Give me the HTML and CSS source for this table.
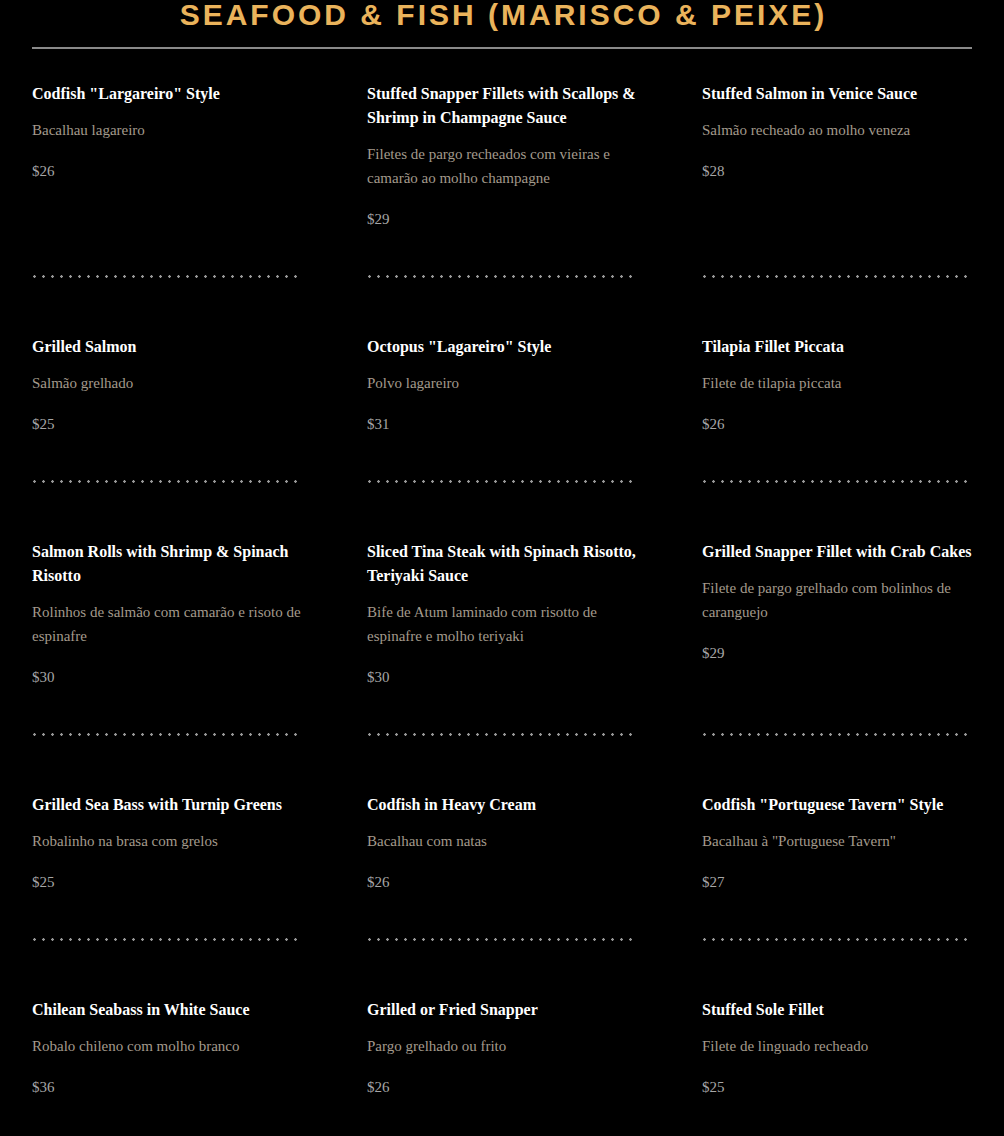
FILE: index.html
```html
<!DOCTYPE html>
<html lang="en">
<head>
    <meta charset="UTF-8">
    <meta name="viewport" content="width=device-width, initial-scale=1.0">
    <title>Seafood &amp; Fish</title>
    <link rel="stylesheet" href="styles.css">
</head>
<body>
    <h1 class="section-title">Seafood &amp; Fish (Marisco &amp; Peixe)</h1>

    <div class="menu">
        <div class="item">
            <div class="item-body">
                <h3>Codfish "Largareiro" Style</h3>
                <p class="desc">Bacalhau lagareiro</p>
                <p class="price">$26</p>
            </div>
            <div class="dots"></div>
        </div>
        <div class="item">
            <div class="item-body">
                <h3>Stuffed Snapper Fillets with Scallops &amp; Shrimp in Champagne Sauce</h3>
                <p class="desc">Filetes de pargo recheados com vieiras e camarão ao molho champagne</p>
                <p class="price">$29</p>
            </div>
            <div class="dots"></div>
        </div>
        <div class="item">
            <div class="item-body">
                <h3>Stuffed Salmon in Venice Sauce</h3>
                <p class="desc">Salmão recheado ao molho veneza</p>
                <p class="price">$28</p>
            </div>
            <div class="dots"></div>
        </div>

        <div class="item">
            <div class="item-body">
                <h3>Grilled Salmon</h3>
                <p class="desc">Salmão grelhado</p>
                <p class="price">$25</p>
            </div>
            <div class="dots"></div>
        </div>
        <div class="item">
            <div class="item-body">
                <h3>Octopus "Lagareiro" Style</h3>
                <p class="desc">Polvo lagareiro</p>
                <p class="price">$31</p>
            </div>
            <div class="dots"></div>
        </div>
        <div class="item">
            <div class="item-body">
                <h3>Tilapia Fillet Piccata</h3>
                <p class="desc">Filete de tilapia piccata</p>
                <p class="price">$26</p>
            </div>
            <div class="dots"></div>
        </div>

        <div class="item">
            <div class="item-body">
                <h3>Salmon Rolls with Shrimp &amp; Spinach Risotto</h3>
                <p class="desc">Rolinhos de salmão com camarão e risoto de espinafre</p>
                <p class="price">$30</p>
            </div>
            <div class="dots"></div>
        </div>
        <div class="item">
            <div class="item-body">
                <h3>Sliced Tina Steak with Spinach Risotto, Teriyaki Sauce</h3>
                <p class="desc">Bife de Atum laminado com risotto de espinafre e molho teriyaki</p>
                <p class="price">$30</p>
            </div>
            <div class="dots"></div>
        </div>
        <div class="item">
            <div class="item-body">
                <h3>Grilled Snapper Fillet with Crab Cakes</h3>
                <p class="desc">Filete de pargo grelhado com bolinhos de caranguejo</p>
                <p class="price">$29</p>
            </div>
            <div class="dots"></div>
        </div>

        <div class="item">
            <div class="item-body">
                <h3>Grilled Sea Bass with Turnip Greens</h3>
                <p class="desc">Robalinho na brasa com grelos</p>
                <p class="price">$25</p>
            </div>
            <div class="dots"></div>
        </div>
        <div class="item">
            <div class="item-body">
                <h3>Codfish in Heavy Cream</h3>
                <p class="desc">Bacalhau com natas</p>
                <p class="price">$26</p>
            </div>
            <div class="dots"></div>
        </div>
        <div class="item">
            <div class="item-body">
                <h3>Codfish "Portuguese Tavern" Style</h3>
                <p class="desc">Bacalhau à "Portuguese Tavern"</p>
                <p class="price">$27</p>
            </div>
            <div class="dots"></div>
        </div>

        <div class="item">
            <div class="item-body">
                <h3>Chilean Seabass in White Sauce</h3>
                <p class="desc">Robalo chileno com molho branco</p>
                <p class="price">$36</p>
            </div>
            <div class="dots"></div>
        </div>
        <div class="item">
            <div class="item-body">
                <h3>Grilled or Fried Snapper</h3>
                <p class="desc">Pargo grelhado ou frito</p>
                <p class="price">$26</p>
            </div>
            <div class="dots"></div>
        </div>
        <div class="item">
            <div class="item-body">
                <h3>Stuffed Sole Fillet</h3>
                <p class="desc">Filete de linguado recheado</p>
                <p class="price">$25</p>
            </div>
            <div class="dots"></div>
        </div>
    </div>
</body>
</html>
```

FILE: styles.css
```css
body {
    margin: 0;
    padding: 0 32px;
    background-color: #000;
    font-family: "Liberation Serif", "Times New Roman", serif;
    color: #fff;
}
.section-title {
    margin: 0;
    padding: 0 0 17px 3px;
    border-bottom: 2px solid #8a8a8a;
    font-family: "Liberation Sans", Arial, sans-serif;
    font-size: 30px;
    line-height: 30px;
    font-weight: bold;
    letter-spacing: 3px;
    text-transform: uppercase;
    text-align: center;
    color: #eab35b;
}
.menu {
    display: grid;
    grid-template-columns: repeat(3, 1fr);
    column-gap: 65px;
    row-gap: 57px;
    padding-top: 33px;
}
.item {
    display: flex;
    flex-direction: column;
}
.item-body {
    padding-bottom: 44px;
}
.item h3 {
    margin: 0;
    font-size: 16px;
    line-height: 24px;
    font-weight: bold;
    color: #fff;
}
.desc {
    margin: 12px 0 0;
    font-size: 15px;
    line-height: 24px;
    color: #a39a8c;
}
.price {
    margin: 17px 0 0;
    font-size: 15px;
    line-height: 24px;
    color: #a6a6a6;
}
.dots {
    margin-top: auto;
    height: 3px;
    background: radial-gradient(circle at 1.5px 1.5px, #999 1.1px, transparent 1.5px) 1px 0 / 9px 3px repeat-x;
}
```
